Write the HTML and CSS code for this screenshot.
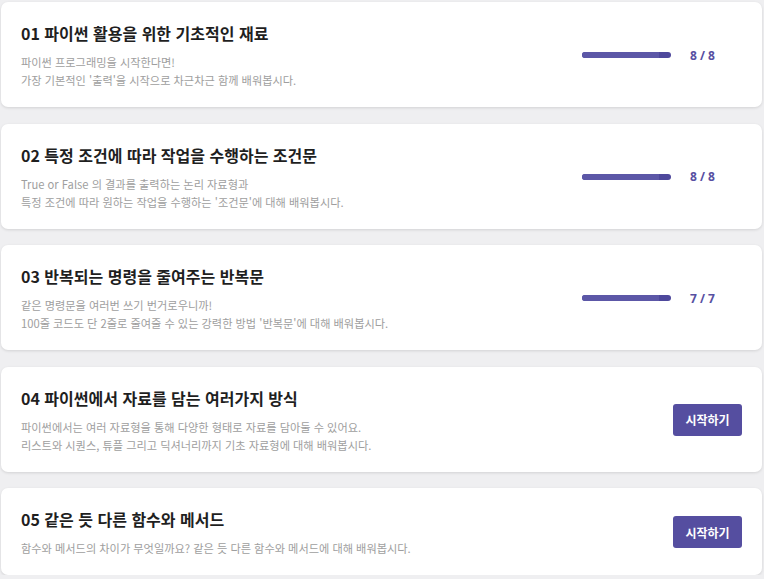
FILE: index.html
```html
<!DOCTYPE html>
<html lang="ko">
<head>
<meta charset="utf-8">
<title>파이썬 강의</title>
<link rel="stylesheet" href="styles.css">
</head>
<body>
<main class="list">
  <section class="card">
    <div class="info">
      <h2 class="title">01 파이썬 활용을 위한 기초적인 재료</h2>
      <p class="desc">파이썬 프로그래밍을 시작한다면!<br>가장 기본적인 '출력'을 시작으로 차근차근 함께 배워봅시다.</p>
    </div>
    <div class="side">
      <div class="bar"><div class="fill" style="width:87%"></div></div>
      <span class="count">8 / 8</span>
    </div>
  </section>
  <section class="card">
    <div class="info">
      <h2 class="title">02 특정 조건에 따라 작업을 수행하는 조건문</h2>
      <p class="desc">True or False 의 결과를 출력하는 논리 자료형과<br>특정 조건에 따라 원하는 작업을 수행하는 '조건문'에 대해 배워봅시다.</p>
    </div>
    <div class="side">
      <div class="bar"><div class="fill" style="width:87%"></div></div>
      <span class="count">8 / 8</span>
    </div>
  </section>
  <section class="card">
    <div class="info">
      <h2 class="title">03 반복되는 명령을 줄여주는 반복문</h2>
      <p class="desc">같은 명령문을 여러번 쓰기 번거로우니까!<br>100줄 코드도 단 2줄로 줄여줄 수 있는 강력한 방법 '반복문'에 대해 배워봅시다.</p>
    </div>
    <div class="side">
      <div class="bar"><div class="fill" style="width:87%"></div></div>
      <span class="count">7 / 7</span>
    </div>
  </section>
  <section class="card">
    <div class="info">
      <h2 class="title">04 파이썬에서 자료를 담는 여러가지 방식</h2>
      <p class="desc">파이썬에서는 여러 자료형을 통해 다양한 형태로 자료를 담아둘 수 있어요.<br>리스트와 시퀀스, 튜플 그리고 딕셔너리까지 기초 자료형에 대해 배워봅시다.</p>
    </div>
    <div class="side side-btn">
      <button class="start" type="button">시작하기</button>
    </div>
  </section>
  <section class="card card-short">
    <div class="info">
      <h2 class="title">05 같은 듯 다른 함수와 메서드</h2>
      <p class="desc">함수와 메서드의 차이가 무엇일까요? 같은 듯 다른 함수와 메서드에 대해 배워봅시다.</p>
    </div>
    <div class="side side-btn">
      <button class="start" type="button">시작하기</button>
    </div>
  </section>
</main>
</body>
</html>
```
FILE: styles.css
```css
html, body {
  margin: 0;
  padding: 0;
  background: #efeff1;
}
body {
  font-family: "Noto Sans CJK KR", "Noto Sans", sans-serif;
  color: #222;
}
.list {
  display: flex;
  flex-direction: column;
  gap: 16.5px;
  padding: 2px 2px 0 1px;
}
.card {
  display: flex;
  align-items: center;
  justify-content: space-between;
  background: #fff;
  border-radius: 7px;
  box-shadow: 0 1px 3px rgba(0, 0, 0, 0.12);
  padding: 19px 20px 18px 20px;
}
.info {
  display: flex;
  flex-direction: column;
  gap: 8px;
}
.title {
  margin: 0;
  font-size: 16px;
  line-height: 24px;
  font-weight: 700;
  color: #1f1f1f;
}
.desc {
  margin: 0;
  font-size: 11.2px;
  line-height: 18px;
  color: #9e9e9e;
}
.side {
  display: flex;
  align-items: center;
  width: 160px;
}
.side-btn {
  justify-content: flex-end;
}
.bar {
  width: 89px;
  height: 6px;
  border-radius: 3px;
  background: #4e489c;
  overflow: hidden;
}
.fill {
  height: 100%;
  background: #5c57a7;
}
.count {
  margin-left: 19px;
  font-size: 12px;
  font-weight: 700;
  color: #5750a2;
  font-family: "Noto Sans", "Noto Sans CJK KR", sans-serif;
}
.start {
  width: 69px;
  height: 32px;
  border: none;
  border-radius: 3px;
  background: #554ea0;
  color: #fff;
  font-family: "Noto Sans CJK KR", sans-serif;
  font-size: 12px;
  font-weight: 700;
  padding: 0;
}
```
